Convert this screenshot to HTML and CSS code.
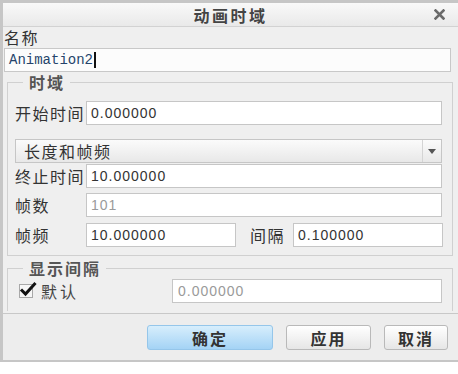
FILE: index.html
```html
<!DOCTYPE html>
<html lang="zh-CN">
<head>
    <meta charset="UTF-8">
    <title>动画时域</title>
    <link rel="stylesheet" href="styles.css">
</head>
<body>
    <div class="dialog">
        <div class="titlebar">
            <span class="title">动画时域</span>
            <span class="close">
                <svg width="11" height="11" viewBox="0 0 11 11"><path d="M1.5 1.5 L9.5 9.5 M9.5 1.5 L1.5 9.5" stroke="#6a6a6a" stroke-width="2.6" stroke-linecap="square"/></svg>
            </span>
        </div>
        <div class="content">
            <div class="name-label">名称</div>
            <div class="name-field">Animation2<span class="caret"></span></div>

            <fieldset class="group group-time">
                <legend>时域</legend>
                <div class="row row-start">
                    <label>开始时间</label>
                    <input type="text" class="field" value="0.000000">
                </div>
                <div class="combo">
                    <span class="combo-text">长度和帧频</span>
                    <span class="combo-arrow"></span>
                </div>
                <div class="row row-end">
                    <label>终止时间</label>
                    <input type="text" class="field" value="10.000000">
                </div>
                <div class="row row-frames">
                    <label>帧数</label>
                    <input type="text" class="field disabled" value="101" disabled>
                </div>
                <div class="row row-rate">
                    <label>帧频</label>
                    <input type="text" class="field half" value="10.000000">
                    <label class="step-label">间隔</label>
                    <input type="text" class="field half" value="0.100000">
                </div>
            </fieldset>

            <fieldset class="group group-interval">
                <legend>显示间隔</legend>
                <div class="row row-check">
                    <span class="checkbox">
                        <svg width="18" height="16" viewBox="0 0 18 16"><path d="M2 8.5 L6.5 13 L16.5 2" fill="none" stroke="#111" stroke-width="3"/></svg>
                    </span>
                    <span class="check-label">默认</span>
                    <input type="text" class="field disabled" value="0.000000" disabled>
                </div>
            </fieldset>
        </div>
        <div class="footer">
            <button class="btn btn-ok">确定</button>
            <button class="btn btn-apply">应用</button>
            <button class="btn btn-cancel">取消</button>
        </div>
    </div>
</body>
</html>
```

FILE: styles.css
```css
body {
    margin: 0;
    padding: 0;
    background-color: #ffffff;
    font-family: "Noto Sans CJK SC", "Liberation Sans", sans-serif;
    color: #333;
}
.dialog {
    width: 458px;
    height: 362px;
    box-sizing: border-box;
    border-top: 3px solid #c6c6c6;
    border-left: 3px solid #c6c6c6;
    border-bottom: 2px solid #c6c6c6;
    background-color: #efefef;
    display: flex;
    flex-direction: column;
}
.titlebar {
    height: 24px;
    box-sizing: border-box;
    border-bottom: 1px solid #d2d2d2;
    background: linear-gradient(#f9f9f9, #e9e9e9);
    display: flex;
    align-items: center;
    justify-content: center;
    position: relative;
}
.title {
    font-size: 16px;
    font-weight: bold;
    letter-spacing: 2.5px;
    color: #444;
    line-height: 20px;
}
.close {
    position: absolute;
    right: 13px;
    top: 6px;
    width: 11px;
    height: 11px;
    display: flex;
}
.content {
    flex: 1;
    display: flex;
    flex-direction: column;
}
.name-label {
    font-size: 16px;
    letter-spacing: 1.5px;
    line-height: 21px;
    padding-left: 1px;
    color: #333;
}
.name-field {
    margin-left: 1px;
    width: 447px;
    height: 24px;
    box-sizing: border-box;
    border: 1px solid #c8c8c8;
    background-color: #fcfcfc;
    font-family: "Liberation Mono", monospace;
    font-size: 14px;
    color: #25446b;
    padding-left: 4px;
    display: flex;
    align-items: center;
}
.caret {
    display: inline-block;
    width: 2px;
    height: 16px;
    background-color: #111;
    margin-left: 1px;
}
.group {
    margin: 0 0 0 4px;
    width: 446px;
    box-sizing: border-box;
    border: 1px solid #d0d0d0;
    padding: 0 10px 0 7px;
    min-width: 0;
}
.group legend {
    font-size: 16px;
    font-weight: bold;
    letter-spacing: 2px;
    color: #555;
    line-height: 20px;
    margin-left: 8px;
    padding: 0 5px 0 6px;
}
.group-time {
    padding-bottom: 8px;
}
.group-interval {
    margin-top: 2px;
    padding-bottom: 8px;
    border-bottom: none;
}
.row {
    display: flex;
    align-items: center;
}
.row label {
    width: 71px;
    flex-shrink: 0;
    font-size: 16px;
    letter-spacing: 1.5px;
    color: #333;
    white-space: nowrap;
}
.row-start {
    margin-top: 9px;
}
.row-end {
    margin-top: 1px;
}
.row-frames {
    margin-top: 5px;
}
.row-rate {
    margin-top: 6px;
}
.field {
    flex: 1;
    height: 24px;
    box-sizing: border-box;
    border: 1px solid #c6c6c6;
    background-color: #ffffff;
    font-family: "Liberation Sans", sans-serif;
    font-size: 14px;
    letter-spacing: 1px;
    color: #333;
    padding: 0 0 0 4px;
    margin: 0;
    min-width: 0;
}
.field.disabled {
    color: #9a9a9a;
    background-color: #ffffff;
}
.field.half {
    flex: none;
    width: 150px;
}
.row .step-label {
    width: 43px;
    margin-left: 14px;
}
.combo {
    margin-top: 14px;
    height: 24px;
    box-sizing: border-box;
    border: 1px solid #c6c6c6;
    background: linear-gradient(#fbfbfb, #e8e8e8);
    display: flex;
    align-items: center;
}
.combo-text {
    flex: 1;
    padding-left: 8px;
    font-size: 16px;
    letter-spacing: 1.5px;
    color: #333;
}
.combo-arrow {
    width: 18px;
    height: 22px;
    border-left: 1px solid #d4d4d4;
    position: relative;
}
.combo-arrow::after {
    content: "";
    position: absolute;
    left: 5px;
    top: 9px;
    border-left: 4px solid transparent;
    border-right: 4px solid transparent;
    border-top: 5px solid #555;
}
.row-check {
    height: 25px;
}
.checkbox {
    width: 14px;
    height: 14px;
    box-sizing: border-box;
    border: 1px solid #a8a8a8;
    background-color: #f6f6f6;
    margin-left: 4px;
    flex-shrink: 0;
    position: relative;
}
.checkbox svg {
    position: absolute;
    left: -1px;
    top: -4px;
}
.check-label {
    font-size: 16px;
    letter-spacing: 3px;
    color: #444;
    margin-left: 8px;
    width: 131px;
    flex-shrink: 0;
}
.row-check .field {
    padding-left: 5px;
}
.footer {
    height: 47px;
    box-sizing: border-box;
    border-top: 1px solid #c8c8c8;
    background-color: #ededed;
    display: flex;
    justify-content: flex-end;
    align-items: flex-start;
    padding: 11px 10px 0 0;
    gap: 13px;
}
.btn {
    height: 25px;
    box-sizing: border-box;
    border: 1px solid #b9b9b9;
    border-radius: 3px;
    background: linear-gradient(#ffffff, #e6e6e6);
    font-family: "Noto Sans CJK SC", sans-serif;
    font-size: 16px;
    font-weight: bold;
    letter-spacing: 2px;
    color: #333;
    padding: 0;
    line-height: 20px;
}
.btn-ok {
    width: 126px;
    border-color: #95c6ea;
    background: linear-gradient(#d7eefc, #a4d3f5);
}
.btn-apply {
    width: 85px;
}
.btn-cancel {
    width: 64px;
}
```
